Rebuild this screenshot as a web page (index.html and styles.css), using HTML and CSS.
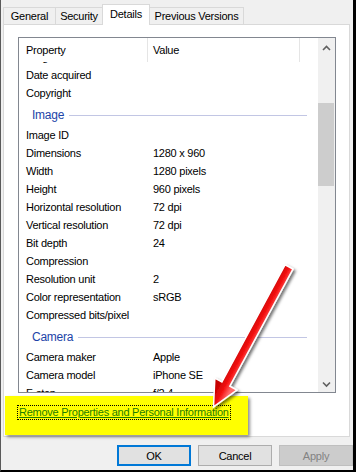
FILE: index.html
```html
<!doctype html>
<html lang="en">
 <head>
  <meta charset="UTF-8">
  <meta name="viewport" content="width=device-width, initial-scale=1.0">
  <title>Properties - Details</title>
  <link rel="stylesheet" href="styles.css">
 </head>
 <body>
  <div class="dialog">
   <div class="tabs">
    <div class="tab tab-general">General</div>
    <div class="tab tab-security">Security</div>
    <div class="tab tab-details tab-active">Details</div>
    <div class="tab tab-versions">Previous Versions</div>
   </div>

   <div class="panel">
    <div class="list">
     <div class="list-main">
      <div class="list-head">
       <div class="col-prop">Property</div>
       <div class="col-val">Value</div>
       <div class="col-rest"></div>
      </div>
      <div class="list-body">
       <div class="row row-first"><div class="col-prop">Program name</div><div class="col-val"></div></div>
       <div class="row"><div class="col-prop">Date acquired</div><div class="col-val"></div></div>
       <div class="row"><div class="col-prop">Copyright</div><div class="col-val"></div></div>
       <div class="group"><span>Image</span></div>
       <div class="row"><div class="col-prop">Image ID</div><div class="col-val"></div></div>
       <div class="row"><div class="col-prop">Dimensions</div><div class="col-val">1280 x 960</div></div>
       <div class="row"><div class="col-prop">Width</div><div class="col-val">1280 pixels</div></div>
       <div class="row"><div class="col-prop">Height</div><div class="col-val">960 pixels</div></div>
       <div class="row"><div class="col-prop">Horizontal resolution</div><div class="col-val">72 dpi</div></div>
       <div class="row"><div class="col-prop">Vertical resolution</div><div class="col-val">72 dpi</div></div>
       <div class="row"><div class="col-prop">Bit depth</div><div class="col-val">24</div></div>
       <div class="row"><div class="col-prop">Compression</div><div class="col-val"></div></div>
       <div class="row"><div class="col-prop">Resolution unit</div><div class="col-val">2</div></div>
       <div class="row"><div class="col-prop">Color representation</div><div class="col-val">sRGB</div></div>
       <div class="row"><div class="col-prop">Compressed bits/pixel</div><div class="col-val"></div></div>
       <div class="group"><span>Camera</span></div>
       <div class="row"><div class="col-prop">Camera maker</div><div class="col-val">Apple</div></div>
       <div class="row"><div class="col-prop">Camera model</div><div class="col-val">iPhone SE</div></div>
       <div class="row"><div class="col-prop">F-stop</div><div class="col-val">f/2.4</div></div>
       <div class="row"><div class="col-prop">Exposure time</div><div class="col-val">1/30 sec.</div></div>
      </div>
     </div>
     <div class="scrollbar">
      <div class="sb-btn">
       <svg width="17" height="17" viewBox="0 0 17 17"><polyline points="5,12 8.5,8.5 12,12" fill="none" stroke="#606060" stroke-width="1.6"/></svg>
      </div>
      <div class="sb-track"><div class="sb-thumb"></div></div>
      <div class="sb-btn">
       <svg width="17" height="17" viewBox="0 0 17 17"><polyline points="5,7.5 8.5,11 12,7.5" fill="none" stroke="#606060" stroke-width="1.6"/></svg>
      </div>
     </div>
    </div>
   </div>

   <div class="buttons">
    <button class="btn btn-default" type="button">OK</button>
    <button class="btn" type="button">Cancel</button>
    <button class="btn btn-disabled" type="button">Apply</button>
   </div>

   <!-- annotation: highlighted link and pointer arrow -->
   <div class="callout">
    <a class="remove-link" href="#">Remove Properties and Personal Information</a>
   </div>
   <svg class="arrow" width="356" height="472" viewBox="0 0 356 472">
    <defs>
     <linearGradient id="red" gradientUnits="userSpaceOnUse" x1="0" y1="-7" x2="0" y2="7">
      <stop offset="0" stop-color="#ff6a6a"/>
      <stop offset="0.45" stop-color="#f51212"/>
      <stop offset="1" stop-color="#c40000"/>
     </linearGradient>
     <filter id="shadow" x="-20%" y="-20%" width="140%" height="140%">
      <feDropShadow dx="2" dy="2" stdDeviation="1.5" flood-color="#000" flood-opacity="0.55"/>
     </filter>
    </defs>
    <g filter="url(#shadow)">
     <g transform="translate(289 267) rotate(118.35)">
      <polygon points="0,-4.5 133,-4.5 133,-12.5 159,0 133,12.5 133,4.5 0,4.5" fill="url(#red)" stroke="#fff" stroke-width="1.5" stroke-linejoin="miter"/>
     </g>
    </g>
   </svg>
  </div>
 </body>
</html>
```

FILE: styles.css
```css
body {
  margin: 0;
  padding: 0;
  font-family: "Liberation Sans", Arial, sans-serif;
  font-size: 11px;
  letter-spacing: -0.25px;
  color: #000;
  background-color: #f0f0f0;
}
.dialog {
  position: relative;
  box-sizing: border-box;
  width: 356px;
  height: 472px;
  background-color: #f0f0f0;
  border-left: 1px solid #5a5a5a;
  border-right: 3px solid #000;
  border-bottom: 2px solid #000;
  overflow: hidden;
}
.tabs {
  display: flex;
  align-items: flex-end;
  height: 24px;
  padding-left: 2px;
}
.tab {
  box-sizing: border-box;
  height: 17px;
  line-height: 16px;
  margin-right: -1px;
  text-align: center;
  white-space: nowrap;
  border: 1px solid #d9d9d9;
  border-bottom: none;
  background-color: #f0f0f0;
}
.tab-general {
  width: 53px;
}
.tab-security {
  width: 48px;
}
.tab-details {
  width: 48px;
}
.tab-versions {
  width: 95px;
}
.tab-active {
  position: relative;
  z-index: 2;
  height: 21px;
  line-height: 18px;
  margin-bottom: -1px;
  background-color: #fff;
}
.panel {
  box-sizing: border-box;
  height: 413px;
  margin: 0 3px 0 2px;
  padding: 12px 0 0 14px;
  background-color: #fff;
  border: 1px solid #d9d9d9;
}
.list {
  display: flex;
  box-sizing: border-box;
  width: 318px;
  height: 356px;
  border: 1px solid #828790;
}
.list-main {
  width: 299px;
}
.list-head {
  display: flex;
  height: 24px;
  line-height: 25px;
}
.list-head .col-prop,
.list-head .col-val {
  border-right: 1px solid #e5e5e5;
}
.col-prop {
  box-sizing: border-box;
  width: 129px;
  padding-left: 7px;
  white-space: nowrap;
}
.col-val {
  box-sizing: border-box;
  width: 152px;
  padding-left: 5px;
  white-space: nowrap;
}
.col-rest {
  flex: 1;
}
.list-body {
  height: 330px;
  overflow: hidden;
}
.row {
  display: flex;
  height: 18px;
  line-height: 18px;
}
.row-first {
  margin-top: -14px;
}
.group {
  display: flex;
  align-items: center;
  box-sizing: border-box;
  height: 24px;
  padding: 2px 11px 0 13px;
  color: #1c44a8;
  font-size: 12px;
}
.group::after {
  content: '';
  flex: 1;
  height: 1px;
  margin-left: 5px;
  background-color: #c2c6e4;
}
.scrollbar {
  display: flex;
  flex-direction: column;
  width: 17px;
  background-color: #f0f0f0;
}
.sb-btn {
  height: 17px;
}
.sb-btn svg {
  display: block;
}
.sb-track {
  flex: 1;
}
.sb-thumb {
  height: 83px;
  margin: 48px 1px 0 0;
  background-color: #cdcdcd;
}
.buttons {
  display: flex;
  justify-content: flex-end;
  gap: 7px;
  margin-top: 8px;
}
.btn {
  box-sizing: border-box;
  width: 74px;
  height: 21px;
  padding: 0;
  font-family: inherit;
  font-size: 11px;
  letter-spacing: -0.25px;
  color: #000;
  background-color: #e1e1e1;
  border: 1px solid #adadad;
}
.btn-default {
  border: 2px solid #0078d7;
}
.btn-disabled {
  color: #838383;
  background-color: #cccccc;
  border-color: #bfbfbf;
}
.callout {
  position: absolute;
  left: 4px;
  top: 396px;
  box-sizing: border-box;
  width: 243px;
  height: 39px;
  padding: 9px 0 0 12px;
  background-color: #ffff00;
  box-shadow: 2px 2px 3px rgba(0, 0, 0, 0.45);
  z-index: 3;
}
.remove-link {
  display: inline-block;
  padding: 0 1px;
  line-height: 13px;
  color: #1d7d00;
  border: 1px dotted #000;
}
.arrow {
  position: absolute;
  left: -1px;
  top: 0;
  z-index: 4;
  pointer-events: none;
}
```
